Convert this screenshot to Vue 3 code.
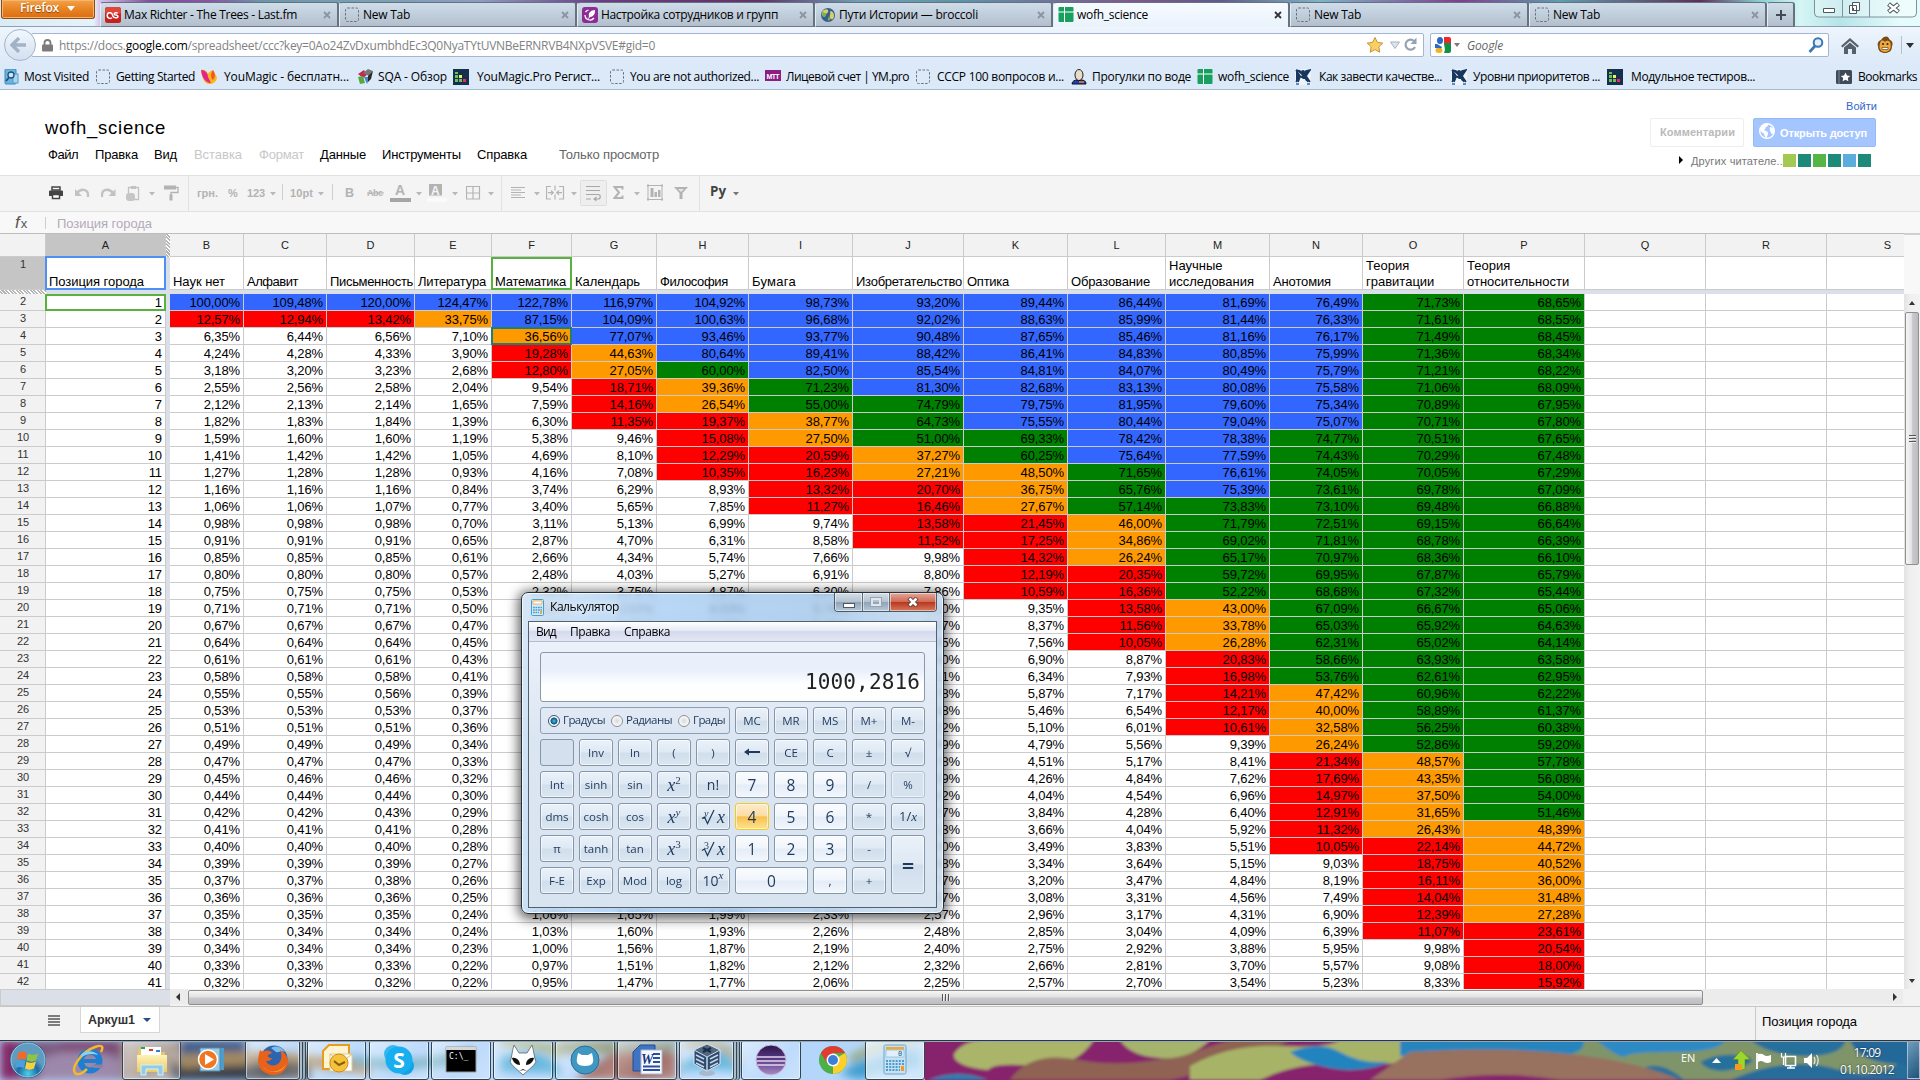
<script setup>
// Narrows or widens letter spacing so a label takes the given width.
const vFit = {
  mounted(el, { value }) {
    if (!value) return
    const range = document.createRange()
    range.selectNodeContents(el)
    const w = range.getBoundingClientRect().width
    el.style.letterSpacing = ((value - w) / el.textContent.length).toFixed(3) + 'px'
  }
}

// Turns start positions into slot widths for a flex row.
const slots = (list, end) =>
  list.map((it, i) => ({ ...it, w: (i + 1 < list.length ? list[i + 1].x : end) - it.x }))

const favicons = {
  lastfm: '<rect width="16" height="16" rx="2.500" fill="#c8201c"/><rect width="16" height="7" rx="2.500" fill="#e0453a"/><path d="M7 10.800c-.8.8-4.800 1.200-4.800-2.300s4.300-3.500 5-1.300l.9 2.300c.5 1.500 4.900 1.900 4.900-.1 0-2-3.800-.8-3.800-2.400 0-1.500 2.500-1.700 3.500-.7" fill="none" stroke="#fff" stroke-width="1.500"/>',
  blank: '<rect x="1.500" y="1" width="13" height="13.500" rx="2" fill="none" stroke="#6a7178" stroke-dasharray="2.500 1.500"/>',
  leaf: '<rect width="16" height="16" rx="3" fill="#8e2c96"/><path d="M3 8a5 5 0 0 0 9 3M3.500 5a6 6 0 0 1 3-2" fill="none" stroke="#fff" stroke-width="1.300"/><path d="M7 9c-1-3 2-6 6-6 .5 4-2 7-5 7l-2 3z" fill="#fff"/>',
  globe: '<circle cx="8" cy="8" r="7" fill="#35608e"/><path d="M4 3c3-2 5 0 4 2s-3 2-3 4-3 0-3-2 0-3 2-4zM11 4c3 1 4 5 2 8-3 1-4-2-3-4s-1-3 1-4z" fill="#d9cf68"/><path d="M2 5c2-1 2 2 4 1v3l-3 1zM8 10l3 2-3 2z" fill="#7db04a"/>',
  sheet: '<rect x="0.500" y="0" width="15" height="15" rx="1" fill="#18a05f"/><path d="M6.500 0v15M0 5h16" stroke="#fff" stroke-width="1"/>',
  visited: '<rect x="1" y="0" width="11" height="15" rx="1" fill="#6bb4df" stroke="#3f87b8"/><rect x="9" y="5" width="5" height="9" fill="#a9d6ef" stroke="#5a9cc7"/><circle cx="7" cy="6" r="3" fill="#cde8f7" stroke="#1c5179" stroke-width="1.300"/><path d="M5 8.500 2 12" stroke="#1c5179" stroke-width="1.800"/>',
  phoenix: '<path d="M0 1c4-1 6 1 7 4 1-3 4-3 5-4 1 3 3 4 4 8-1 4-4 6-8 6C4 15 1 10 0 1z" fill="#fbb51b"/><path d="M0 1c4 0 7 3 7 7l3 6C5 14 1 9 0 1z" fill="#e2238b"/><path d="M12 1c2 3 3 6 0 10-2-1-3-6 0-10z" fill="#f0582a"/>',
  sqa: '<path d="M1 5 7 1l3 5-4 3z" fill="#c22a50"/><path d="m1 8 5-1 2 7-5 1z" fill="#57a83e"/><path d="M7 8h6l-3 7z" fill="#4b87c5"/><path d="m6 4 5-4 5 2-4 5z" fill="#777"/><path d="m11 7 5-5-2 8-3 3z" fill="#2b2b2b"/>',
  dark: '<rect width="16" height="16" fill="#15304f"/><path d="M2 3h3v2H2zM2 6h3v3H2zM2 10h3v3H2zM6 10h3v3H6z" fill="#6cbf5a"/><path d="M6 6h3v3H6z" fill="#f1ef62"/><path d="M10 10h3v3h-3z" fill="#ee2c4a"/>',
  mtt: '<rect y="1" width="16" height="11" fill="#8c1d82"/><text x="8" y="9.500" font-family="Liberation Sans" font-size="7" font-weight="bold" fill="#fff" text-anchor="middle" textLength="13">МТТ</text>',
  person: '<ellipse cx="8" cy="6" rx="4" ry="5.500" fill="#e9dccb" stroke="#222"/><path d="M1 15c0-3 3-4 5-4l2 1 2-1c3 0 5 1 5 4z" fill="#1b3fc4" stroke="#111"/><path d="M8 13h5" stroke="#e88a2a" stroke-width="1.500"/>',
  jira: '<rect width="16" height="16" fill="#eef3fa"/><circle cx="8" cy="3" r="2" fill="#17375f"/><path d="m1 1 4 1 3 4 3-4 4-1-4 6 4 6M1 13l4-6-4-6M5 8l3-1 3 1 2 5M5 8l-2 5" fill="#17375f" stroke="#17375f" stroke-width="1.600"/><path d="M6 10h4l1 6H5z" fill="#eef3fa"/><path d="M1 15h3M12 15h3" stroke="#2c6ab5" stroke-width="1.500"/>',
  marks: '<rect y="1" width="16" height="14" rx="1.500" fill="#3d4a58"/><path d="M3 1v14" stroke="#7f8c9a"/><path d="m9.500 3.500 1.500 3 3.200.4-2.400 2.200.6 3.200-2.900-1.600-2.900 1.600.6-3.200-2.400-2.200 3.200-.4z" fill="#fff"/>'
}

const tabs = slots([
  { x: 100, icon: 'lastfm', t: 'Max Richter - The Trees - Last.fm', f: 173 },
  { x: 339, icon: 'blank', t: 'New Tab', f: 47 },
  { x: 577, icon: 'leaf', t: 'Настройка сотрудников и групп', f: 177 },
  { x: 815, icon: 'globe', t: 'Пути Истории — broccoli', f: 139 },
  { x: 1053, icon: 'sheet', t: 'wofh_science', f: 71, on: true },
  { x: 1290, icon: 'blank', t: 'New Tab', f: 47 },
  { x: 1529, icon: 'blank', t: 'New Tab', f: 47 }
], 1767)

const marks = slots([
  { x: 4, icon: 'visited', o: 20, t: 'Most Visited', f: 65 },
  { x: 95, icon: 'blank', o: 21, t: 'Getting Started', f: 79 },
  { x: 201, icon: 'phoenix', o: 23, t: 'YouMagic - бесплатн...', f: 125 },
  { x: 357, icon: 'sqa', o: 21, t: 'SQA - Обзор', f: 69 },
  { x: 453, icon: 'dark', o: 24, t: 'YouMagic.Pro Регист...', f: 123 },
  { x: 609, icon: 'blank', o: 21, t: 'You are not authorized...', f: 129 },
  { x: 765, icon: 'mtt', o: 21, t: 'Лицевой счет | YM.pro', f: 123 },
  { x: 915, icon: 'blank', o: 22, t: 'СССР 100 вопросов и...', f: 127 },
  { x: 1071, icon: 'person', o: 21, t: 'Прогулки по воде', f: 99 },
  { x: 1197, icon: 'sheet', o: 21, t: 'wofh_science', f: 71 },
  { x: 1295, icon: 'jira', o: 24, t: 'Как завести качестве...', f: 123 },
  { x: 1451, icon: 'jira', o: 22, t: 'Уровни приоритетов ...', f: 127 },
  { x: 1607, icon: 'dark', o: 24, t: 'Модульное тестиров...', f: 124 },
  { x: 1836, icon: 'marks', o: 22, t: 'Bookmarks', f: 59 }
], 1920)

const menus = slots([
  { x: 48, t: 'Файл', f: 30 }, { x: 95, t: 'Правка', f: 43 }, { x: 154, t: 'Вид', f: 23 },
  { x: 194, t: 'Вставка', f: 48, off: true }, { x: 259, t: 'Формат', f: 45, off: true },
  { x: 320, t: 'Данные', f: 46 }, { x: 382, t: 'Инструменты', f: 79 }, { x: 477, t: 'Справка', f: 50 },
  { x: 559, t: 'Только просмотр', f: 100, note: true }
], 700)

const g = '#b3b3b3'
const tri = (c = '#b8b8b8') => `<path d="M0 16h6l-3 3.500z" fill="${c}"/>`
const vline = '<path d="M.5 0v36" stroke="#e2e2e2"/>'
const sline = '<path d="M.5 8v16" stroke="#cfcfcf"/>'
const lbl = (t, w, s = 11) => `<text x="0" y="20.500" font-family="Liberation Sans" font-weight="bold" font-size="${s}" fill="#b3b3b3" textLength="${w}">${t}</text>`
const tools = slots([
  { x: 49, s: '<path d="M3 11h8v3H3z" fill="none" stroke="#444" stroke-width="1.500"/><path d="M1 14.500h12a1 1 0 0 1 1 1V20H0v-4.500a1 1 0 0 1 1-1z" fill="#444"/><path d="M3.500 18.500h7v4h-7z" fill="#fff" stroke="#444" stroke-width="1.500"/>' },
  { x: 74, s: `<path d="M3 17c4-5 11-4 11 2v2" fill="none" stroke="#c2c2c2" stroke-width="2.300"/><path d="M1 13v7h7z" fill="#c2c2c2"/>` },
  { x: 101, s: `<path d="M12 17c-4-5-11-4-11 2v2" fill="none" stroke="#c2c2c2" stroke-width="2.300"/><path d="M14.500 13v7h-7z" fill="#c2c2c2"/>` },
  { x: 126, s: `<path d="M2.500 11.500h10v12h-10z" fill="none" stroke="#c2c2c2" stroke-width="1.300"/><path d="M5 10h5v3H5z" fill="#c2c2c2"/><rect x="0" y="17" width="9" height="8" rx="3" fill="#c6c6c6"/>` },
  { x: 149, s: tri() },
  { x: 164, s: `<path d="M0 9.500h12v4H0z" fill="${g}"/><path d="M12 11.500h2v5H7v3" fill="none" stroke="${g}" stroke-width="1.300"/><path d="M5.500 18.500h3v6h-3z" fill="${g}"/>` },
  { x: 188, s: vline },
  { x: 197, s: lbl('грн.', 21) }, { x: 228, s: lbl('%', 9) }, { x: 247, s: lbl('123', 18) }, { x: 270, s: tri() },
  { x: 282, s: sline }, { x: 290, s: lbl('10pt', 23) }, { x: 318, s: tri() }, { x: 332, s: sline },
  { x: 345, s: '<text y="21" font-family="Liberation Sans" font-weight="bold" font-size="12.500" fill="#b3b3b3">B</text>' },
  { x: 367, s: '<text y="20" font-family="Liberation Sans" font-weight="bold" font-size="9" fill="#b3b3b3" textLength="16">Abc</text><path d="M0 17h17" stroke="#b3b3b3"/>' },
  { x: 390, s: '<text x="5" y="19" font-family="Liberation Sans" font-weight="bold" font-size="14" fill="#b3b3b3">A</text><path d="M0 22h21v4H0z" fill="#a6a6a6"/>' },
  { x: 416, s: tri() },
  { x: 427, s: '<path d="M2 8h13v11.500H2z" fill="#b3b3b3"/><text x="4" y="18.500" font-family="Liberation Sans" font-weight="bold" font-size="12" fill="#f4f4f4">A</text><path d="M0 22h20v4H0z" fill="#fafafa"/>' },
  { x: 452, s: tri() },
  { x: 466, s: `<path d="M.5 10.500h13V23H.5zM7 10.500V23M.5 17h13" fill="none" stroke="${g}" stroke-width="1.200"/>` },
  { x: 488, s: tri() }, { x: 501, s: vline },
  { x: 511, s: `<path d="M0 11.500h14M0 14h10M0 16.500h14M0 19h10M0 21.500h14" stroke="${g}" stroke-width="1.100"/>` },
  { x: 534, s: tri() },
  { x: 546, s: `<path d="M5 10.500H.5V23H5M13 10.500h4.500V23H13M9 9.500v5M9 18.500v5" fill="none" stroke="${g}" stroke-width="1.200"/><path d="M2 16.700h5M16 16.700h-5M5 14.500l2.300 2.200L5 18.900M13 14.500l-2.300 2.200L13 18.900" fill="none" stroke="${g}" stroke-width="1.200"/>` },
  { x: 571, s: tri() },
  { x: 580, s: `<rect x=".5" y="4.500" width="26" height="25" rx="1" fill="#eeeeee" stroke="#dedede"/><path d="M6 10.500h14M6 14.500h14M6 18.500h12c3 0 3 4.500 0 4.500h-4M6 23h5" fill="none" stroke="#a8a8a8" stroke-width="1.200"/><path d="M16.500 20.500v5L13 23z" fill="#a8a8a8"/>` },
  { x: 613, s: `<path d="M9.500 13.500V11H1.500L6 16.500 1.500 22h8v-2.500" fill="none" stroke="${g}" stroke-width="2"/>` },
  { x: 634, s: tri() },
  { x: 646, s: `<path d="M2 9.500h14v14H2z" fill="none" stroke="${g}"/><path d="M1 8.500h2v2H1zM15 8.500h2v2h-2zM1 22.500h2v2H1zM15 22.500h2v2h-2zM4.500 12h3v9h-3zM8.500 16h2.500v5H8.500zM12 14h2.500v7H12z" fill="${g}"/>` },
  { x: 674, s: `<path d="M0 11h14L8.500 17v6h-3v-6z" fill="${g}"/><path d="M4 13h6l-3 3z" fill="#e6e6e6"/>` },
  { x: 699, s: vline },
  { x: 710, s: '<text y="19.500" font-family="Open Sans" font-weight="bold" font-size="14" fill="#444" textLength="16" lengthAdjust="spacingAndGlyphs">Ру</text>' },
  { x: 733, s: tri('#777') }
], 745)

const cols = [
  ['B', 74, 'Наук нет', 52], ['C', 83, 'Алфавит', 51], ['D', 88, 'Письменность', 83], ['E', 77, 'Литература', 68],
  ['F', 80, 'Математика', 71], ['G', 85, 'Календарь', 65], ['H', 92, 'Философия', 68], ['I', 104, 'Бумага', 44],
  ['J', 111, 'Изобретательство', 106], ['K', 104, 'Оптика', 42], ['L', 98, 'Образование', 79], ['M', 104, 'Научные исследования'],
  ['N', 93, 'Анотомия', 58], ['O', 101, 'Теория гравитации'], ['P', 121, 'Теория относительности'],
  ['Q', 121, ''], ['R', 121, ''], ['S', 78, '']
]

const raw = {
  B: '100,00 12,57 6,35 4,24 3,18 2,55 2,12 1,82 1,59 1,41 1,27 1,16 1,06 0,98 0,91 0,85 0,80 0,75 0,71 0,67 0,64 0,61 0,58 0,55 0,53 0,51 0,49 0,47 0,45 0,44 0,42 0,41 0,40 0,39 0,37 0,36 0,35 0,34 0,34 0,33 0,32',
  C: '109,48 12,94 6,44 4,28 3,20 2,56 2,13 1,83 1,60 1,42 1,28 1,16 1,06 0,98 0,91 0,85 0,80 0,75 0,71 0,67 0,64 0,61 0,58 0,55 0,53 0,51 0,49 0,47 0,46 0,44 0,42 0,41 0,40 0,39 0,37 0,36 0,35 0,34 0,34 0,33 0,32',
  D: '120,00 13,42 6,56 4,33 3,23 2,58 2,14 1,84 1,60 1,42 1,28 1,16 1,07 0,98 0,91 0,85 0,80 0,75 0,71 0,67 0,64 0,61 0,58 0,56 0,53 0,51 0,49 0,47 0,46 0,44 0,43 0,41 0,40 0,39 0,38 0,36 0,35 0,34 0,34 0,33 0,32',
  E: '124,47 33,75 7,10 3,90 2,68 2,04 1,65 1,39 1,19 1,05 0,93 0,84 0,77 0,70 0,65 0,61 0,57 0,53 0,50 0,47 0,45 0,43 0,41 0,39 0,37 0,36 0,34 0,33 0,32 0,30 0,29 0,28 0,28 0,27 0,26 0,25 0,24 0,24 0,23 0,22 0,22',
  F: '122,78 87,15 36,56 19,28 12,80 9,54 7,59 6,30 5,38 4,69 4,16 3,74 3,40 3,11 2,87 2,66 2,48 2,32 2,18 2,06 1,95 1,85 1,76 1,68 1,61 1,54 1,48 1,42 1,37 1,32 1,28 1,24 1,20 1,16 1,12 1,09 1,06 1,03 1,00 0,97 0,95',
  G: '116,97 104,09 77,07 44,63 27,05 18,71 14,16 11,35 9,46 8,10 7,08 6,29 5,65 5,13 4,70 4,34 4,03 3,75 3,52 3,31 3,12 2,96 2,81 2,67 2,55 2,44 2,34 2,24 2,16 2,08 2,00 1,93 1,87 1,81 1,75 1,70 1,65 1,60 1,56 1,51 1,47',
  H: '104,92 100,63 93,46 80,64 60,00 39,36 26,54 19,37 15,08 12,29 10,35 8,93 7,85 6,99 6,31 5,74 5,27 4,87 4,53 4,23 3,97 3,74 3,54 3,35 3,19 3,04 2,90 2,78 2,66 2,56 2,46 2,37 2,28 2,20 2,13 2,06 1,99 1,93 1,87 1,82 1,77',
  I: '98,73 96,68 93,77 89,41 82,50 71,23 55,00 38,77 27,50 20,59 16,23 13,32 11,27 9,74 8,58 7,66 6,91 6,30 5,78 5,35 4,97 4,65 4,36 4,11 3,89 3,69 3,51 3,34 3,19 3,06 2,93 2,81 2,70 2,60 2,51 2,42 2,33 2,26 2,19 2,12 2,06',
  J: '93,20 92,02 90,48 88,42 85,54 81,30 74,79 64,73 51,00 37,27 27,21 20,70 16,46 13,58 11,52 9,98 8,80 7,86 7,10 6,47 5,95 5,50 5,11 4,78 4,48 4,22 3,99 3,78 3,59 3,42 3,27 3,13 3,00 2,88 2,77 2,67 2,57 2,48 2,40 2,32 2,25',
  K: '89,44 88,63 87,65 86,41 84,81 82,68 79,75 75,55 69,33 60,25 48,50 36,75 27,67 21,45 17,25 14,32 12,19 10,59 9,35 8,37 7,56 6,90 6,34 5,87 5,46 5,10 4,79 4,51 4,26 4,04 3,84 3,66 3,49 3,34 3,20 3,08 2,96 2,85 2,75 2,66 2,57',
  L: '86,44 85,99 85,46 84,83 84,07 83,13 81,95 80,44 78,42 75,64 71,65 65,76 57,14 46,00 34,86 26,24 20,35 16,36 13,58 11,56 10,05 8,87 7,93 7,17 6,54 6,01 5,56 5,17 4,84 4,54 4,28 4,04 3,83 3,64 3,47 3,31 3,17 3,04 2,92 2,81 2,70',
  M: '81,69 81,44 81,16 80,85 80,49 80,08 79,60 79,04 78,38 77,59 76,61 75,39 73,83 71,79 69,02 65,17 59,72 52,22 43,00 33,78 26,28 20,83 16,98 14,21 12,17 10,61 9,39 8,41 7,62 6,96 6,40 5,92 5,51 5,15 4,84 4,56 4,31 4,09 3,88 3,70 3,54',
  N: '76,49 76,33 76,17 75,99 75,79 75,58 75,34 75,07 74,77 74,43 74,05 73,61 73,10 72,51 71,81 70,97 69,95 68,68 67,09 65,03 62,31 58,66 53,76 47,42 40,00 32,58 26,24 21,34 17,69 14,97 12,91 11,32 10,05 9,03 8,19 7,49 6,90 6,39 5,95 5,57 5,23',
  O: '71,73 71,61 71,49 71,36 71,21 71,06 70,89 70,71 70,51 70,29 70,05 69,78 69,48 69,15 68,78 68,36 67,87 67,32 66,67 65,92 65,02 63,93 62,61 60,96 58,89 56,25 52,86 48,57 43,35 37,50 31,65 26,43 22,14 18,75 16,11 14,04 12,39 11,07 9,98 9,08 8,33',
  P: '68,65 68,55 68,45 68,34 68,22 68,09 67,95 67,80 67,65 67,48 67,29 67,09 66,88 66,64 66,39 66,10 65,79 65,44 65,06 64,63 64,14 63,58 62,95 62,22 61,37 60,38 59,20 57,78 56,08 54,00 51,46 48,39 44,72 40,52 36,00 31,48 27,28 23,61 20,54 18,00 15,92'
}
const data = Object.fromEntries(Object.entries(raw).map(([k, v]) => [k, v.split(' ')]))
const band = (s) => {
  const n = parseFloat((s || '0').replace(',', '.'))
  return n >= 75 ? 'blue' : n >= 50 ? 'green' : n >= 25 ? 'orange' : n >= 10 ? 'red' : ''
}
const rows = Array.from({ length: 41 }, (_, i) => ({
  n: i + 2,
  cells: cols.map(([c, w]) => {
    const v = data[c] ? data[c][i] : ''
    return { w, v: v ? v + '%' : '', k: [band(v), c === 'F' && i === 2 ? 'pick' : ''] }
  })
}))

const it = (s) => `<i>${s}</i>`
const root = (n) => `<svg class="rad" width="15" height="16" viewBox="0 0 15 16"><path d="M1 9.500 3.500 8l3 6.500L13 1" fill="none" stroke="#1e395b" stroke-width="1.200"/><text x="3" y="8" font-family="Liberation Serif" font-size="10" font-style="${n === 'y' ? 'italic' : 'normal'}" fill="#1e395b">${n}</text></svg>`
const keys = [
  ['MC'], ['MR'], ['MS'], ['M+'], ['M-'],
  ['', 'empty'], ['Inv'], ['ln'], ['('], [')'], ['<svg width="18" height="10" viewBox="0 0 18 10"><path d="M1 5 6 1.500v2.500h11v2H6v2.500z" fill="#1e395b"/></svg>'], ['CE'], ['C'], ['±'], ['√'],
  ['Int'], ['sinh'], ['sin'], [it('x') + '<sup>2</sup>', 'math'], ['n!', 'mid'], ['7', 'num'], ['8', 'num'], ['9', 'num'], ['/'], ['%', 'dim'],
  ['dms'], ['cosh'], ['cos'], [it('x<sup>y</sup>'), 'math'], [root('y') + it('x'), 'math'], ['4', 'num hot'], ['5', 'num'], ['6', 'num'], ['*'], ['1/' + it('x'), 'inv'],
  ['π'], ['tanh'], ['tan'], [it('x') + '<sup>3</sup>', 'math'], [root('3') + it('x'), 'math'], ['1', 'num'], ['2', 'num'], ['3', 'num'], ['-'], ['=', 'tall'],
  ['F-E'], ['Exp'], ['Mod'], ['log'], ['10' + '<sup><i>x</i></sup>', 'mid'], ['0', 'num wide'], [',', 'num small'], ['+']
]

const apps = slots([
  { x: 0, n: 'start' }, { x: 61, n: 'ie' }, { x: 122, n: 'folder', b: 59 }, { x: 183, n: 'wmp' },
  { x: 245, n: 'firefox', b: 55, st: true }, { x: 307, n: 'outlook', b: 59 }, { x: 369, n: 'skype', b: 60 },
  { x: 431, n: 'cmd', b: 60 }, { x: 493, n: 'foobar', b: 60 }, { x: 555, n: 'github', b: 60 },
  { x: 617, n: 'word', b: 60 }, { x: 679, n: 'vbox', b: 55, st: true }, { x: 741, n: 'eclipse', b: 60 },
  { x: 803, n: 'chrome', p: 60 }, { x: 865, n: 'calc', b: 60, lit: true }
], 926)
const appIcons = {
  start: '<circle cx="16" cy="16" r="18" fill="#1f5f94"/><circle cx="16" cy="16" r="17" fill="url(#orb)" stroke="#9dc9dd"/><path d="M6 9c3-2 6-2 9 0l-1.500 7c-3-1.500-6-1.500-8.500 0z" fill="#ef6a2c"/><path d="M16 9.500c4 2 7 1.500 10 0l-2 7c-3 1.500-6 1.500-9.500 0z" fill="#8fc640"/><path d="M4.500 17c3-1.500 6-1.500 9 0L12 24c-3-1.500-6-1.500-9 0z" fill="#4aa0dd"/><path d="M14.500 17.500c3 2 6 1.500 9.500 0l-2 7c-3 1.500-6 1.500-9 0z" fill="#fbcf3b"/>',
  ie: '<circle cx="17" cy="17" r="9.500" fill="none" stroke="#1c7fd0" stroke-width="6"/><path d="M9 17h17" stroke="#1c7fd0" stroke-width="4"/><path d="M20 20.500h10v3.500H20z" fill="#8f7fa0"/><path d="M2 29C-2 24 8 8 22 3c9-3 8 1 6 5M2 29c3 3 8 0 12-4" fill="none" stroke="#f3b92c" stroke-width="2.500"/><path d="M8 11c4-5 13-5 17 0-6-2-11-1-17 2z" fill="#8ad0f6"/>',
  folder: '<path d="M2 5h9l2 3h16v20H2z" fill="#e8c766"/><path d="M5 3h20v12H5z" fill="#fff"/><path d="M5 3h4v2H5z" fill="#2fa34a"/><path d="M13 5h4v2h-4z" fill="#d73a3a"/><path d="M20 6h4v2h-4z" fill="#2f7fd0"/><path d="M1 11h30v17H1z" fill="url(#fold)"/><path d="M5 31V21h22v10h-5v-6H10v6z" fill="#8fcbea" stroke="#d9f0fb"/>',
  wmp: '<path d="M8 4h21v22H8z" fill="#4d9cc9"/><path d="M5 4h20v23H5z" fill="#9ccbe5" stroke="#4d89af"/><circle cx="13" cy="15.500" r="9.500" fill="#f0771f" stroke="#fff" stroke-width="1.500"/><path d="M10 10v11l9-5.500z" fill="#fff"/>',
  firefox: '<circle cx="17" cy="15" r="13.500" fill="#2c64ad"/><path d="M14 4c5-3 11-1 14 4-4-2-6 1-9 0z" fill="#7dbdeb"/><path d="M3 6c1 2 3 1 5 1 3-1 6 0 7 2l-4 2c-1 2 1 3 4 3-1 3-4 3-6 3 2 5 9 6 13 2 3-3 3-9 1-13 6 3 8 8 8 12-1 9-8 13-15 13S2 26 1 18C1 13 2 10 3 6z" fill="#e8621b"/><path d="M5 21c5 9 18 9 24-1-3 7-8 8-12 8S8 27 5 21z" fill="#f8b63e"/>',
  outlook: '<path d="M2 7 8 1h20v24H2z" fill="#fff4d2" stroke="#e79c1e" stroke-width="2"/><path d="M9 10h22v17H9z" fill="#fff" stroke="#dfc896"/><path d="m9 10 11 9 11-9" fill="none" stroke="#d9b96d"/><circle cx="18" cy="19" r="9" fill="#f4c33b" stroke="#c98f14"/><path d="m13 17 5 4 6-3" fill="none" stroke="#8a5d0c" stroke-width="2"/>',
  skype: '<circle cx="10" cy="10" r="9" fill="#35b8f0"/><circle cx="22" cy="22" r="9" fill="#13a3e4"/><circle cx="16" cy="16" r="13.500" fill="#18aef0"/><text x="16" y="23.500" font-family="Open Sans" font-weight="bold" font-size="21" fill="#fff" text-anchor="middle">S</text>',
  cmd: '<path d="M1 3h30v25H1z" fill="#000" stroke="#9a9a9a"/><path d="M1 3h30v3H1z" fill="#d6d6d6"/><text x="4" y="15" font-family="DejaVu Sans Mono" font-size="8" fill="#fff">C:\\_</text>',
  foobar: '<path d="m7 1 5 8h8l5-8c2 6 2 12 4 17-3 5-8 8-13 13C11 26 6 23 3 18 5 13 5 7 7 1z" fill="#fff" stroke="#5b646b" stroke-width=".8"/><path d="M5 14c4-1 8 2 8 7-4 0-7-3-8-7zM27 14c-4-1-8 2-8 7 4 0 7-3 8-7zM12 27l4-2 4 2-4-1z" fill="#111"/>',
  github: '<circle cx="16" cy="16" r="14" fill="#3f97c2" stroke="#256f9a"/><path d="m9 9 4 2h6l4-2 1 5c1 5-1 8-8 8s-9-3-8-8z" fill="#fff"/>',
  word: '<path d="M2 8 9 1h15v26H2z" fill="#3e74c2" stroke="#254d92"/><path d="M10 6h21v24H10z" fill="#f5f8fe" stroke="#a9b8d6"/><path d="M12 26h17M12 22.500h17M22 10h7M22 14h7M22 18h7" stroke="#2a4f9c" stroke-width="2"/><text x="10" y="20" font-family="Liberation Serif" font-weight="bold" font-style="italic" font-size="14" fill="#17377e">W</text>',
  vbox: '<ellipse cx="16" cy="29" rx="8" ry="3" fill="#a7b9cb"/><path d="m16 0 13 6v14l-13 7-13-7V6z" fill="#2e4a6e" stroke="#dbe5ef"/><path d="m16 0 13 6-13 7L3 6z" fill="#51677f" stroke="#cfdbe6"/><path d="M16 13v14M5 11l8 4M5 15l8 4M5 19l8 4M27 11l-8 4M27 15l-8 4M27 19l-8 4" stroke="#c5d6e6" stroke-width="1.500"/><path d="m12 4 8 4M20 4l-8 4" stroke="#1c2e46" stroke-width="2"/>',
  eclipse: '<circle cx="16" cy="16" r="15" fill="url(#ecl)" stroke="#cdb9dd"/><path d="M2 13h28M1.500 17h29M2.500 21h27" stroke="#e5d6ee" stroke-width="1.500"/>',
  chrome: '<circle cx="16" cy="16" r="14" fill="#4caf48"/><path d="M16 16 28.100 9A14 14 0 0 1 16 30z" fill="#fbd02c"/><path d="M16 9h12.200a14 14 0 0 0-24.300 0L10 19z" fill="#e03c31"/><circle cx="16" cy="16" r="6.500" fill="#fff"/><circle cx="16" cy="16" r="5" fill="#3c7fd6"/>',
  calc: '<rect x="5" y="1" width="22" height="29" rx="1.500" fill="#c5e2f5" stroke="#6aa6cc"/><path d="M7 3h18v2.500H7z" fill="#f6a52e"/><rect x="7" y="6" width="18" height="7" fill="#dff0fb" stroke="#7fb0cf" stroke-width=".6"/><text x="19" y="12" font-family="DejaVu Sans Mono" font-size="7" fill="#235a84">0</text><path d="M7 17h18M7 20h18M7 23h14M7 26h14" stroke="#4f9aca" stroke-width="2" stroke-dasharray="2 1.200"/><path d="M22 22h3v5h-3z" fill="#f39a22"/>'
}
</script>

<template>
  <div class="desktop">
    <!-- browser chrome -->
    <div class="strip">
      <div class="ffbtn"><span v-fit="39">Firefox</span><i class="dn white"></i></div>
      <div class="tabs">
        <div v-for="t in tabs" :key="t.x" class="tab" :class="{ on: t.on }" :style="{ width: t.w + 'px' }">
          <svg width="16" height="16" viewBox="0 0 16 16" v-html="favicons[t.icon]"></svg>
          <span v-fit="t.f">{{ t.t }}</span>
          <svg class="x" width="8" height="8" viewBox="0 0 8 8"><path d="m1 1 6 6M7 1 1 7" stroke="currentColor" stroke-width="1.800" /></svg>
        </div>
        <div class="tab plus"><svg width="12" height="12" viewBox="0 0 12 12"><path d="M6 1v10M1 6h10" stroke="#3f4a55" stroke-width="2" /></svg></div>
      </div>
      <div class="winbtns">
        <svg width="103" height="18" viewBox="0 0 103 18">
          <path d="M.5 0v13a4 4 0 0 0 4 4h94a4 4 0 0 0 4-4V0M28.500 0v17M55.500 0v17" fill="rgba(255,255,255,.35)" stroke="#7d929c" />
          <path d="M9.500 8.500h11v4h-11z" fill="#fff" stroke="#4c5961" />
          <path d="M38.500 2.500h7v8h-7zM35.500 5.500h7v8h-7z" fill="#fff" stroke="#4c5961" /><path d="M38 8h2v3h-2z" fill="#4c5961" />
          <path d="m74.500 4 10 8M84.500 4l-10 8" stroke="#4c5961" stroke-width="4.500" /><path d="m75 4.500 9 7M84 4.500l-9 7" stroke="#fff" stroke-width="2.300" />
        </svg>
      </div>
    </div>

    <div class="nav">
      <div class="back"><svg width="18" height="16" viewBox="0 0 18 16"><path d="M9 1 2 8l7 7M2 8h14" fill="none" stroke="#a3b3c6" stroke-width="3.400" /></svg></div>
      <div class="url">
        <svg width="11" height="13" viewBox="0 0 11 13"><path d="M2.500 6V4a3 3 0 0 1 6 0v2" fill="none" stroke="#7b7b7b" stroke-width="1.800" /><rect x="0" y="5.500" width="11" height="7" rx="1" fill="#7b7b7b" /></svg>
        <span v-fit="596" class="addr">https://docs.<b>google.com</b>/spreadsheet/ccc?key=0Ao24ZvDxumbhdEc3Q0NyaTYtUVNBeERNRVB4NXpVSVE#gid=0</span>
        <svg class="ends" width="54" height="18" viewBox="0 0 54 18">
          <path d="m8 1.500 2.400 4.900 5.400.7-4 3.700 1 5.400L8 13.600l-4.800 2.600 1-5.400-4-3.700 5.400-.7z" fill="#fbd063" stroke="#c9923a" />
          <path d="M23.500 6h9l-4.500 6.500z" fill="#dfe5ee" stroke="#a5b1c2" />
          <path d="M47 5a5 5 0 1 0 1 6" fill="none" stroke="#94a2b3" stroke-width="2.200" /><path d="M49.500 1.500v6.500h-6z" fill="#94a2b3" />
        </svg>
      </div>
      <div class="search">
        <svg width="16" height="16" viewBox="0 0 16 16"><rect width="16" height="16" rx="2" fill="#fff" /><path d="M9 0h5a2 2 0 0 1 2 2v4H9z" fill="#f0272a" /><path d="M9 6h7v8a2 2 0 0 1-2 2H9c2-4 0-6 0-10z" fill="#0f9246" /><ellipse cx="5" cy="3.500" rx="3" ry="3.500" fill="#2a68c9" /><path d="M0 7h2l5 3-1 2-6-1z" fill="#2a68c9" /><ellipse cx="4" cy="13.500" rx="3.500" ry="2.500" fill="#f5b21c" /></svg>
        <i class="dn grey"></i><em v-fit="36">Google</em>
        <svg class="mag" width="16" height="16" viewBox="0 0 16 16"><circle cx="10" cy="5.500" r="4.300" fill="#e6f0fb" stroke="#3b76b3" stroke-width="2" /><path d="m7 9-5.500 6" stroke="#3b76b3" stroke-width="2.600" /></svg>
      </div>
      <svg class="home" width="18" height="16" viewBox="0 0 18 16"><path d="m9 0 9 8-1.500 1.500L9 3 1.500 9.500 0 8z" fill="#56606c" /><path d="M3 9.500 9 4.500l6 5V16h-4v-5H7v5H3z" fill="#56606c" /></svg>
      <svg class="monkey" width="16" height="18" viewBox="0 0 16 18"><path d="M4 4c2-4 6-4 7-3l2 3c3 1 3 5 2 6 0 5-3 7-7 7s-7-2-7-7c-1-2 0-5 3-6z" fill="#7a4a17" /><path d="M4 5c2-1 3 0 4 1 1-1 3-2 5 0 1 3 2 9-5 10-7-1-6-7-4-11z" fill="#eda83a" /><circle cx="6" cy="8" r="1" fill="#222" /><circle cx="10.500" cy="8" r="1" fill="#222" /><path d="M5 11.500h6v2H5z" fill="#fff" stroke="#5a3208" stroke-width=".6" /></svg>
      <i class="bar"></i><i class="dn black"></i>
    </div>

    <div class="marks">
      <div v-for="m in marks" :key="m.x" class="mark" :style="{ width: m.w + 'px' }">
        <span class="mi" :style="{ width: m.o + 'px' }"><svg width="16" height="16" viewBox="0 0 16 16" v-html="favicons[m.icon]"></svg></span>
        <span v-fit="m.f">{{ m.t }}</span>
      </div>
    </div>

    <!-- document header -->
    <header class="head">
      <div class="left">
        <div class="title"><span v-fit="121">wofh_science</span></div>
        <div class="menus">
          <div v-for="m in menus" :key="m.x" :style="{ width: m.w + 'px' }" :class="{ off: m.off, note: m.note }"><span v-fit="m.f">{{ m.t }}</span></div>
        </div>
      </div>
      <div class="right">
        <div class="login"><span v-fit="31">Войти</span></div>
        <div class="btns">
          <div class="comm"><span v-fit="75">Комментарии</span></div>
          <div class="share">
            <svg width="16" height="16" viewBox="0 0 16 16"><circle cx="8" cy="8" r="7.300" fill="none" stroke="#fff" stroke-width="1.400" /><path d="M1 6c2-4 5-6 8-5 1 2-1 2-2 3s0 2-2 3c1 1 4 1 4 3s-1 4-2 5c-2-2-1-4-3-5S1 8 1 6zM11 4c2 0 4 1 4 4s-1 3-2 3-3-5-2-7z" fill="#fff" /></svg>
            <span v-fit="87">Открыть доступ</span>
          </div>
        </div>
        <div class="viewers"><i class="rt"></i><span v-fit="92">Других читателе..</span><b class="c1"></b><b class="c2"></b><b class="c3"></b><b class="c2"></b><b class="c4"></b><b class="c2"></b></div>
      </div>
    </header>

    <div class="toolbar">
      <svg v-for="t in tools" :key="t.x" :width="t.w" height="35" v-html="t.s"></svg>
    </div>
    <div class="fx"><span class="f"><i>f</i>x</span><i class="sep"></i><span v-fit="95" class="ft">Позиция города</span></div>

    <!-- spreadsheet -->
    <div class="sheet">
      <div class="grid">
        <div class="row hdr">
          <div class="rn"></div><div class="a cur">A</div><div class="hatch"></div>
          <div v-for="c in cols" :key="c[0]" class="h" :class="{ last: c[0] === 'S' }" :style="{ width: c[1] + 'px' }">{{ c[0] }}</div>
        </div>
        <div class="row one">
          <div class="rn cur">1</div><div class="a sel"><span v-fit="95">Позиция города</span></div><div class="fz"></div>
          <div v-for="c in cols" :key="c[0]" class="c" :class="{ mark2: c[0] === 'F', wrap: c[2].includes(' ') && c[0] !== 'B' }" :style="{ width: c[1] + 'px' }"><span v-fit="c[3]">{{ c[2] }}</span></div>
        </div>
        <div class="freeze"><i></i></div>
        <div class="body">
          <div v-for="r in rows" :key="r.n" class="row">
            <div class="rn">{{ r.n }}</div><div class="a num" :class="{ g: r.n === 2 }">{{ r.n - 1 }}</div><div class="fz"></div>
            <div v-for="(c, j) in r.cells" :key="j" class="c v" :class="c.k" :style="{ width: c.w + 'px' }">{{ c.v }}</div>
          </div>
        </div>
      </div>
      <div class="vs">
        <div class="vtop"></div>
        <div class="vtrack"><i class="up"></i><div class="vthumb"><i></i><i></i><i></i></div><i class="down"></i></div>
      </div>
    </div>
    <div class="hs"><div class="corner"></div><div class="hl"><i></i></div><div class="hthumb"><i></i><i></i><i></i></div><div class="hr"><i></i></div></div>
    <div class="foot">
      <svg width="12" height="12" viewBox="0 0 12 12"><path d="M0 1h12M0 4h12M0 7h12M0 10h12" stroke="#555" stroke-width="1.700" /></svg>
      <div class="sh"><span v-fit="47">Аркуш1</span><i class="dn navy"></i></div>
      <div class="stat"><span v-fit="95">Позиция города</span></div>
    </div>

    <!-- taskbar -->
    <div class="task">
      <svg class="wall" width="1920" height="40" viewBox="0 0 1920 40" preserveAspectRatio="none">
        <defs>
          <filter id="soft" x="-5%" y="-50%" width="110%" height="200%"><feGaussianBlur stdDeviation="4" /></filter>
          <filter id="edge" x="-5%" y="-50%" width="110%" height="200%"><feGaussianBlur stdDeviation="1.500" /></filter>
          <radialGradient id="orb" cy=".9"><stop offset="0" stop-color="#4fd0e8" /><stop offset=".6" stop-color="#1d6ba5" /><stop offset="1" stop-color="#5f9cc0" /></radialGradient>
          <linearGradient id="fold" x2="0" y2="1"><stop offset="0" stop-color="#fdf2b8" /><stop offset="1" stop-color="#eacb63" /></linearGradient>
          <linearGradient id="ecl" x2="0" y2="1"><stop offset="0" stop-color="#2a1648" /><stop offset=".5" stop-color="#5b3c88" /><stop offset="1" stop-color="#a98cc4" /></linearGradient>
        </defs>
        <rect width="925" height="40" fill="#b5d6fb" />
        <g filter="url(#soft)">
          <path d="M0 0h130v40H0z" fill="#7a5a80" /><path d="M0 0h20v40H0z" fill="#832a67" /><path d="M40 20q40-20 80 0v20H40z" fill="#9c88ab" /><path d="M60 0h60v12H60z" fill="#7c4672" />
          <path d="M122 0h60v40h-60z" fill="#a8998c" /><path d="M180 0h66v40h-66z" fill="#3e5c8b" /><path d="M170 22h80v18h-80z" fill="#323b4a" /><path d="M180 15q90-10 190 8v12q-90-16-190-6z" fill="#a58b63" /><path d="M250 22h60v18h-60z" fill="#43454a" />
          <path d="M352 14q60 14 120-8v14q-60 16-120 4z" fill="#68a8be" /><path d="M500 16q40-10 60 10v10q-40-6-60-4z" fill="#4baad8" /><path d="M500 2q50 2 60 14" stroke="#a3ad6c" stroke-width="8" fill="none" />
          <path d="M556 0h60v14h-60z" fill="#8a9778" /><path d="M575 40q70-60 102-24v24z" fill="#94594f" /><path d="M618 0h58v12h-58z" fill="#8e9c8b" /><path d="M680 24q40-24 60 0v10q-40-10-60 0z" fill="#4baad8" /><path d="M685 6q30-12 54 14" stroke="#b1a77c" stroke-width="8" fill="none" />
          <path d="M840 34q20-20 80-26v20q-40 4-60 12z" fill="#439fd0" /><path d="M850 20q30-18 70-20" stroke="#93a46a" stroke-width="7" fill="none" />
        </g>
        <g filter="url(#edge)">
          <rect x="925" width="1000" height="40" fill="#87206c" />
          <path d="M928 40q30-12 60 0z" fill="#2a7fb2" />
          <path d="M954 14q12-18 50-14h90q-20 30-60 26t-46 4q-36-4-34-16z" fill="#aab56b" />
          <path d="M1010 40q20-30 70-20t120-10l30-10h60l-40 22-80 18z" fill="#8f6253" />
          <path d="M1120 0h90q-20 20-50 18t-40-18z" fill="#a5b46d" />
          <path d="M1190 26q40-22 90-20t60-6h110q-30 28-90 24t-100 16h-70z" fill="#a7b468" />
          <path d="M1290 12q30-12 50 0t50 10q-30 12-60 6t-40-16z" fill="#2484be" />
          <path d="M1440 0h480v40h-480z" fill="#7f9569" />
          <path d="M1400 0h184q2 18-40 16t-144 0z" fill="#2785bd" />
          <path d="M1596 0h130q-6 12-50 12t-50 4-30-16z" fill="#2d8ac4" />
          <path d="M1750 0h96q-4 16-40 16t-56-16z" fill="#266f9c" /><path d="M1700 22q20-10 42-6t-4 12-38-6z" fill="#266f9c" />
          <path d="M1640 30q20-12 44 10h-44z" fill="#266f9c" /><path d="M1730 40q60-26 110-10t80-30v40z" fill="#256d99" /><path d="M1850 0h70v24q-60 4-70-24z" fill="#24699a" />
          <path d="M1370 40l40-28q90-6 160 2t110 26z" fill="#98715f" /><path d="M1440 40q60-10 120 0z" fill="#87206c" />
        </g>
      </svg>
      <div class="apps">
        <div v-for="a in apps" :key="a.n" class="slot" :class="{ btn: a.b, st: a.st, lit: a.lit }" :style="{ width: a.w + 'px' }">
          <div class="face" :style="{ width: (a.b || a.p || 56) + 'px' }"><svg width="32" height="32" viewBox="0 0 32 32" overflow="visible" v-html="appIcons[a.n]"></svg></div>
        </div>
      </div>
      <div class="tray">
        <span class="en">EN</span>
        <svg width="120" height="24" viewBox="0 0 120 24">
          <path d="M5 14h9l-4.500-5z" fill="#fff" />
          <path d="M34 1l9 9h-5v10h-7V10h-5z" fill="#9ed62b" stroke="#5c8d12" stroke-width=".6" transform="translate(0 .5)" /><rect x="28" y="15" width="7" height="6" fill="#f49a22" />
          <path d="M50 4v16" stroke="#fff" stroke-width="1.800" /><path d="M51 5q4-1 6 1t7 0v7q-4 2-7 0t-6 0z" fill="#fff" />
          <path d="M78.500 7.500h10v9h-10zM80 19h8M83.500 17v2" fill="none" stroke="#fff" stroke-width="1.600" /><path d="M74.500 4v4h4V4M76.500 8v8" fill="none" stroke="#fff" stroke-width="1.200" />
          <path d="M97 9h3l5-5v15l-5-5h-3z" fill="#fff" /><path d="M107 8q2 3 0 7M109.500 6q3.500 5 0 11" fill="none" stroke="#e7eef2" stroke-width="1.200" />
        </svg>
        <div class="clock"><span v-fit="27">17:09</span><span v-fit="54">01.10.2012</span></div>
        <div class="peek"></div>
      </div>
    </div>

    <!-- calculator window -->
    <div class="calc">
      <div class="ctitle">
        <svg width="13" height="17" viewBox="0 0 13 17"><rect x=".5" y=".5" width="12" height="16" rx="1" fill="#d5eaf8" stroke="#4b9ccb" /><path d="M2 2h9v3H2z" fill="#fff" stroke="#f0a63c" stroke-width=".8" /><path d="M2 8.500h9M2 11h9M2 13.500h6" stroke="#4b9ccb" stroke-width="1.500" stroke-dasharray="1.800 .7" /><path d="M9 12h2v3H9z" fill="#f0a63c" /></svg>
        <span v-fit="69">Калькулятор</span>
        <div class="cb"><i class="mn"></i><i class="mx"></i><i class="cl"><svg width="12" height="10" viewBox="0 0 12 10"><path d="m2 1 8 8M10 1 2 9" stroke="#5d3230" stroke-width="4.200" /><path d="m2.500 1.500 7 7M9.500 1.500l-7 7" stroke="#fff" stroke-width="2.600" /></svg></i></div>
      </div>
      <div class="client">
        <div class="cmenu"><span v-fit="20">Вид</span><span v-fit="40">Правка</span><span v-fit="46">Справка</span></div>
        <div class="disp"><span v-fit="115">1000,2816</span></div>
        <div class="keys">
          <div class="radios">
            <i class="r on"></i><span v-fit="42">Градусы</span><i class="r"></i><span v-fit="46">Радианы</span><i class="r"></i><span v-fit="32">Грады</span>
          </div>
          <div v-for="(k, i) in keys" :key="i" class="key" :class="k[1]"><span v-html="k[0]"></span></div>
        </div>
      </div>
    </div>
  </div>
</template>

<style>
body { margin: 0; overflow: hidden; }
.key sup { font-size: 11px; line-height: 0; vertical-align: 7px; }
.key .rad { vertical-align: -2px; margin-right: 1px; }
.key i { font-family: "Liberation Serif", serif; font-style: italic; }
</style>

<style scoped>
.desktop { position: relative; width: 1920px; height: 1080px; overflow: hidden; display: flex; flex-direction: column; background: #fff; font-family: "Liberation Sans", Arial, sans-serif; font-size: 13px; color: #000; }
.desktop span { white-space: nowrap; }
.desktop svg { flex: none; }
.dn { width: 0; height: 0; border: 4px solid transparent; border-bottom: 0; border-top: 5px solid #fff; }
.dn.grey { border-width: 4px 3px 0; border-top-color: #7a7a7a; }
.dn.black { border-top-color: #2e2e2e; }
.dn.navy { border-width: 4px 4px 0; border-top-color: #2b4a87; }

.strip { height: 27px; flex: none; display: flex; box-sizing: border-box; border-bottom: 1px solid #8ba0b2; background: linear-gradient(90deg, #d9ecf6 0, #e4f2fb 94px, #d8c0ea 100px, #7d4f9c 150px, #8a55a5 210px, #6b94a8 260px, #78a0b3 360px, #8e9cc0 480px, #6a3c84 600px, #5f3468 760px, #71a0b6 860px, #5d94a8 960px, #805890 1130px, #5f5a8a 1220px, #7fb3c6 1320px, #7f3f90 1460px, #5f9cae 1560px, #5c3058 1700px, #8ad0d2 1760px, #d5f6f4 1800px, #b5e4e8 1840px, #e6fbfb 1900px); font-family: "Open Sans", sans-serif; font-size: 12px; }
.ffbtn { width: 92px; height: 18px; margin-left: 1px; border: 1px solid #8f4a12; border-top: 0; border-radius: 0 0 3px 3px; box-sizing: content-box; background: linear-gradient(#f3a24a, #ea8626 45%, #da6c12); box-shadow: inset 0 0 0 1px #f6b56d; display: flex; align-items: center; color: #fff; font-weight: 600; margin-right: 5px; }
.ffbtn span { margin-left: 18px; width: 39px; margin-right: 8px; text-shadow: 0 1px 1px #8a4300; line-height: 16px; margin-top: -2px; }
.ffbtn i { margin-top: -2px; }
.tabs { display: flex; padding-top: 2px; height: 25px; box-sizing: border-box; width: 1697px; }
.tab { box-sizing: border-box; height: 25px; display: flex; align-items: center; padding-left: 4px; background: linear-gradient(#cfdcea, #c2cfdd 45%, #b3bfcd); border-left: 1px solid #e3edf6; border-right: 2px solid #66727e; border-top: 1px solid #66727e; border-bottom: 1px solid #6c7a87; border-radius: 3px 3px 0 0; }
.tab span { margin-left: 3px; line-height: 18px; }
.tab .x { margin-left: auto; margin-right: 6px; color: #8a95a1; }
.tab.on { background: linear-gradient(#f7fbff, #e9f2fc); border-bottom-color: #e9f2fc; height: 26px; }
.tab.on .x { color: #333; }
.tab.plus { width: 28px; padding-left: 7px; }
.winbtns { margin-left: auto; width: 106px; height: 18px; }

.nav { height: 38px; flex: none; display: flex; align-items: flex-start; background: linear-gradient(#eef5fd, #dce9f8); font-family: "Open Sans", sans-serif; font-size: 12px; padding-top: 6px; box-sizing: border-box; }
.back { width: 32px; height: 32px; box-sizing: border-box; border: 1px solid #a6b4c8; border-radius: 50%; background: linear-gradient(#f2f7fd, #d3e0f0); margin: -4px 0 0 4px; display: flex; align-items: center; justify-content: center; position: relative; }
.back svg { margin-left: -2px; }
.url { height: 24px; width: 1393px; margin-left: -5px; box-sizing: border-box; border: 1px solid #a3b5cf; border-radius: 2px; background: #fff; display: flex; align-items: center; padding-left: 10px; color: #828282; }
.addr { margin-left: 6px; line-height: 20px; padding-top: 1px; }
.addr b { font-weight: normal; color: #000; }
.ends { margin-left: auto; margin-right: 2px; }
.search { height: 24px; width: 399px; margin-left: 6px; box-sizing: border-box; border: 1px solid #a3b5cf; border-radius: 2px; background: #fff; display: flex; align-items: center; padding-left: 4px; color: #666; }
.search i { margin: 0 7px 0 3px; }
.search em { white-space: nowrap; padding-top: 1px; }
.mag { margin-left: auto; margin-right: 4px; margin-top: -1px; }
.home { margin: 5px 0 0 12px; }
.monkey { margin: 3px 0 0 18px; }
.bar { width: 1px; height: 18px; background: #b3c0d0; margin: 3px 4px 0 8px; }
.nav > .dn { margin-top: 10px; }
.marks { height: 25px; flex: none; display: flex; box-sizing: border-box; border-bottom: 1px solid #a9bcd2; background: #dbe9f8; padding: 0 0 1px 4px; font-family: "Open Sans", sans-serif; font-size: 12px; }
.mark { display: flex; align-items: center; flex: none; }
.mi { flex: none; height: 16px; }

.head { height: 85px; flex: none; display: flex; justify-content: space-between; }
.title { margin: 27px 0 0 45px; font-size: 18.500px; line-height: 22px; height: 22px; }
.menus { display: flex; margin: 8px 0 0 48px; line-height: 16px; }
.menus .off { color: #c8c8c8; }
.menus .note { color: #666; }
.right { width: 280px; font-size: 11px; }
.login { margin: 9px 0 0 206px; color: #3366cc; line-height: 14px; height: 14px; }
.btns { display: flex; margin: 5px 0 0 10px; gap: 9px; height: 29px; font-weight: bold; }
.comm { width: 94px; box-sizing: border-box; border: 1px solid #eee; border-radius: 2px; color: #b9b9b9; padding-left: 9px; line-height: 27px; }
.share { width: 123px; box-sizing: border-box; border: 1px solid #94bafa; border-radius: 2px; background: #a5c5fe; color: #fff; display: flex; align-items: center; padding-left: 5px; gap: 5px; }
.share svg { margin-top: -3px; }
.viewers { display: flex; align-items: center; margin: 6px 0 0 39px; color: #777; height: 14px; }
.viewers span { width: 92px; margin-left: 8px; padding-top: 1px; }
.viewers b { width: 13px; height: 13px; margin-right: 2px; }
.rt { border: 4px solid transparent; border-left-color: #000; border-right: 0; }
.c1 { background: #a4c953; } .c2 { background: #1d8a79; } .c3 { background: #57b544; } .c4 { background: #5cacde; }

.toolbar { height: 37px; flex: none; box-sizing: border-box; border-top: 1px solid #e2e2e2; border-bottom: 1px solid #e2e2e2; background: #f4f4f4; display: flex; padding-left: 49px; }
.toolbar svg { display: block; }
.fx { height: 21px; flex: none; background: #f8f8f8; display: flex; align-items: center; color: #b5a9b9; }
.f { margin-left: 15px; width: 30px; color: #555; font-size: 13px; }
.f i { font-size: 17px; margin-right: 1px; }
.ft { padding-top: 1px; }
.sep { width: 1px; height: 12px; background: #d4c8d6; margin-right: 11px; }

.sheet { display: flex; height: 756px; flex: none; }
.grid { width: 1904px; height: 756px; overflow: hidden; position: relative; }
.row { display: flex; height: 17px; }
.row > div { box-sizing: border-box; flex: none; border-right: 1px solid #cbcbcb; border-bottom: 1px solid #cbcbcb; }
.row > .rn { width: 46px; background: #f2f2f2; text-align: center; font-size: 11px; line-height: 15px; color: #333; padding-left: 1px; }
.row > .a { width: 120px; position: relative; padding: 0 3px 0 3px; }
.row > .num { text-align: right; line-height: 16px; padding-top: 1px; letter-spacing: -0.1px; }
.row > .fz { width: 4px; background: #dadfe8; border: 0; }
.row > .c { position: relative; padding: 1px 3px 0 3px; }
.row > .v { text-align: right; line-height: 16px; letter-spacing: -0.1px; white-space: nowrap; }
.body .row:last-child .c, .body .row:last-child .a { border-bottom: 0; }
.blue { background: #3366ff; } .green { background: #008000; } .orange { background: #ff9900; } .red { background: #ff0000; }
.hdr { height: 24px; border-top: 1px solid #bdbdbd; box-sizing: border-box; }
.hdr > div { background: #f2f2f2; text-align: center; font-size: 11px; line-height: 22px; color: #222; }
.hdr > .a.cur { background: #c5c5c5; }
.hdr > .last { padding-left: 44px; }
.hdr > .hatch { width: 4px; border: 0; background: repeating-linear-gradient(45deg, #fff 0 1px, #b5b5b5 1px 2.500px); }
.one { height: 33px; }
.row.one > .rn { background: #c5c5c5; }
.one > .a, .one > .c { display: flex; align-items: flex-end; line-height: 16px; }
.row.one > .a, .row.one > .c { padding-top: 0; }
.one span { position: relative; top: 1px; }
.one .wrap span { white-space: normal; }
.row.one > .sel::after, .one .mark2::after, .a.g::after, .pick::after { content: ""; position: absolute; inset: -1px -1px -1px -1px; border: 2px solid #4d8ff5; }
.one .mark2::after, .a.g::after { border-color: #57b33e; }
.a.g::after { inset: -0px -1px -1px -1px; }
.pick::after { border-color: #1d8073; }
.one .mark2::after { top: 0; }
.freeze { height: 4px; background: #dadfe8; }
.freeze i { display: block; width: 46px; height: 4px; background: repeating-linear-gradient(45deg, #fff 0 1px, #b5b5b5 1px 2.500px); }
.body { height: 695px; overflow: hidden; }
.vs { width: 16px; }
.vtop { height: 61px; box-sizing: border-box; border-top: 2px solid #d0d0d0; background: #f8f8f8; }
.vtrack { height: 695px; background: linear-gradient(90deg, #e3e3e3, #efefef 40%, #f3f3f3); display: flex; flex-direction: column; align-items: center; }
.up { border: 3px solid transparent; border-bottom: 4px solid #333; border-top: 0; margin: 7px 0 7px; }
.vthumb { width: 14px; height: 253px; box-sizing: border-box; border: 1px solid #8f8f8f; border-radius: 2px; background: linear-gradient(90deg, #f6f6f6, #e4e4e6 45%, #c9c9cd 55%, #bcbcc0); display: flex; flex-direction: column; align-items: center; justify-content: center; gap: 1px; }
.vthumb i { width: 7px; height: 2px; background: #555; border-bottom: 1px solid #eee; box-sizing: border-box; }
.down { border: 3px solid transparent; border-top: 4px solid #333; border-bottom: 0; margin-top: auto; margin-bottom: 6px; }
.hs { height: 18px; flex: none; box-sizing: border-box; border-bottom: 1px solid #c6c6c6; display: flex; background: #f2f2f2; }
.corner { width: 170px; height: 17px; box-sizing: border-box; border: 1px solid #cbcbcb; border-right: 0; background: #dadfe8; }
.hl { width: 18px; height: 15px; background: #ececec; }
.hl i { display: block; margin: 4px 0 0 6px; width: 0; border: 4px solid transparent; border-right: 4px solid #333; border-left: 0; }
.hthumb { width: 1515px; height: 15px; margin-top: 1px; box-sizing: border-box; border: 1px solid #8f8f8f; border-radius: 2px; background: linear-gradient(#f6f6f6, #e2e2e4 45%, #c9c9cd 55%, #bebec2); display: flex; align-items: center; justify-content: center; gap: 1px; }
.hthumb i { width: 2px; height: 7px; background: #555; border-right: 1px solid #eee; box-sizing: border-box; }
.hr { flex: 1; height: 15px; margin-right: 17px; background: #ececec; }
.hr i { display: block; margin: 4px 6px 0 auto; width: 0; border: 4px solid transparent; border-left: 4px solid #333; border-right: 0; }
.foot { height: 33px; flex: none; background: #f2f2f2; display: flex; align-items: flex-start; }
.foot > svg { margin: 8px 0 0 48px; }
.sh { width: 80px; height: 26px; box-sizing: border-box; margin-left: 20px; background: #fff; border: 1px solid #d6d6d6; border-top: 0; display: flex; align-items: center; padding-left: 7px; font-weight: bold; color: #333; font-size: 12.500px; }
.sh i { margin-left: 8px; }
.sh span { width: 47px; }
.stat { margin-left: auto; width: 165px; height: 33px; box-sizing: border-box; border-left: 1px solid #c9c9c9; padding: 7px 0 0 6px; line-height: 16px; }

.task { height: 40px; flex: none; position: relative; display: flex; background: #87206c; overflow: hidden; }
.wall { position: absolute; inset: 0; }
.task::after { content: ""; position: absolute; inset: 0 0 auto; height: 1px; background: #24384a; border-bottom: 1px solid rgba(255, 255, 255, .55); }
.apps { display: flex; position: relative; }
.slot { height: 40px; display: flex; flex: none; }
.face { height: 40px; box-sizing: border-box; display: flex; align-items: center; justify-content: center; }
.btn .face { border: 1px solid #33434f; border-radius: 3px; background: linear-gradient(135deg, rgba(255, 255, 255, .5), rgba(255, 255, 255, .12) 60%, rgba(255, 255, 255, .3)); box-shadow: inset 0 0 0 1px rgba(255, 255, 255, .5); }
.st .face { box-shadow: inset 0 0 0 1px rgba(255, 255, 255, .5), 2px 0 0 rgba(200, 220, 235, .8), 3px 0 0 #33434f, 5px 0 0 rgba(200, 220, 235, .7), 6px 0 0 #33434f; }
.lit .face { background: linear-gradient(135deg, rgba(255, 255, 255, .7), rgba(215, 235, 250, .75)); }
.tray { margin-left: auto; display: flex; align-items: center; position: relative; color: #fff; font-family: "Open Sans", sans-serif; font-size: 12px; }
.en { width: 16px; font-size: 11px; margin: -5px 10px 0 0; }
.tray > svg { margin-top: 1px; }
.clock { width: 80px; display: flex; flex-direction: column; align-items: center; line-height: 17px; text-shadow: 0 0 2px #123; margin-top: 1px; }
.peek { width: 13px; height: 38px; box-sizing: border-box; border: 1px solid rgba(220, 240, 250, .6); margin-left: 0; background: linear-gradient(135deg, rgba(255, 255, 255, .35), rgba(20, 60, 90, .5)); }

.calc { position: absolute; left: 521px; top: 592px; width: 423px; height: 322px; box-sizing: border-box; border: 1px solid #26303a; border-radius: 7px; background: linear-gradient(100deg, rgba(205, 226, 245, .82), rgba(165, 204, 243, .78) 30%, rgba(158, 197, 235, .78) 60%, rgba(205, 222, 240, .82)); backdrop-filter: blur(3px); box-shadow: inset 0 0 0 1px rgba(255, 255, 255, .75), 0 2px 12px 3px rgba(0, 0, 0, .6); font-family: "Open Sans", sans-serif; font-size: 12px; padding: 0 6px; }
.ctitle { height: 28px; display: flex; align-items: flex-start; }
.ctitle > svg { margin: 6px 0 0 3px; }
.ctitle > span { margin: 6px 0 0 6px; line-height: 16px; text-shadow: 0 0 6px #fff; }
.cb { margin-left: auto; display: flex; width: 103px; height: 19px; box-sizing: border-box; border: 1px solid #4c5a68; border-top: 0; border-radius: 0 0 4px 4px; overflow: hidden; }
.cb i { display: flex; align-items: center; justify-content: center; box-sizing: border-box; border-right: 1px solid #5f6c79; background: linear-gradient(#d5dee8, #b4c2d0 48%, #8fa2b6 50%, #b7c8d8); box-shadow: inset 0 0 0 1px rgba(255, 255, 255, .5); }
.mn { width: 28px; } .mx { width: 27px; }
.mn::after { content: ""; width: 12px; background: #fff; border: 1px solid #4c5961; margin-top: 6px; box-sizing: border-box; height: 5px; }
.mx::after { content: ""; width: 10px; height: 8px; border: 2px solid #dfe6ee; outline: 1px solid #98a4b0; box-sizing: border-box; }
.cb .cl { flex: 1; border-right: 0; background: linear-gradient(#e3a89b, #cf6a56 48%, #b5351c 50%, #d77a5c); }
.client { height: 285px; box-sizing: content-box; border: 1px solid #53616f; background: linear-gradient(#eef4fc, #dce6f2 40%, #d9e4f1); }
.cmenu { height: 19px; border-bottom: 1px solid #b6bccc; background: linear-gradient(#fff, #e6eaf5 45%, #d5daee 50%, #e2e6f4); display: flex; padding-left: 7px; line-height: 19px; margin-bottom: 10px; }
.cmenu span { margin-right: 14px; }
.disp { margin: 0 11px 5px; height: 50px; box-sizing: border-box; border: 1px solid #8d99a8; border-radius: 3px; background: linear-gradient(#eaf1fb, #e8f0fb 35%, #fdfeff 65%, #fff); text-align: right; font-family: "DejaVu Sans Mono", monospace; font-size: 21px; line-height: 59px; padding-right: 4px; color: #222; }
.keys { margin: 0 11px; display: grid; grid-template-columns: repeat(10, 34px); grid-auto-rows: 27px; gap: 5px; }
.radios { grid-column: span 5; box-sizing: border-box; border: 1px solid #8a9fb5; border-radius: 3px; display: flex; align-items: center; padding-left: 7px; color: #1e395b; width: 190px; }
.radios span { margin: 0 6px 2px 3px; font-size: 11.500px; }
.r { width: 12px; height: 12px; box-sizing: border-box; border: 1px solid #8e8f8f; border-radius: 50%; background: radial-gradient(#d5d9dd, #f6f6f6 60%, #fff); flex: none; }
.r.on { background: radial-gradient(#35c6ef 0, #144e7c 45%, #fff 55%); border-color: #33566f; }
.key { box-sizing: border-box; border: 1px solid #8496a9; border-radius: 3px; box-shadow: inset 0 0 0 1px rgba(255, 255, 255, .6); background: linear-gradient(#eaf1f9, #dfe9f4 48%, #d1deeb 52%, #dbe6f2); display: flex; align-items: center; justify-content: center; color: #1e395b; font-size: 11.500px; line-height: 18px; }
.key.empty { background: #d4e0ed; box-shadow: none; }
.key.num { background: linear-gradient(#fafcfe, #f0f5fb 48%, #e4ecf6 52%, #f2f7fc); font-size: 15.500px; }
.key.small { font-size: 12px; }
.key.hot { background: linear-gradient(#fdebc9, #fbdda5 46%, #f9c14f 52%, #fde38f); border-color: #f2cb1d; }
.key.dim { border-color: #b3c2d2; background: #d7e2ef; }
.key.math { font-family: "Liberation Serif", serif; font-size: 18px; }
.key.mid { font-size: 14px; }
.key.inv { font-size: 13px; }
.key.tall { grid-column: 10; grid-row: 5 / span 2; font-size: 22px; font-weight: 600; }
.key.wide { grid-column: span 2; }
</style>
